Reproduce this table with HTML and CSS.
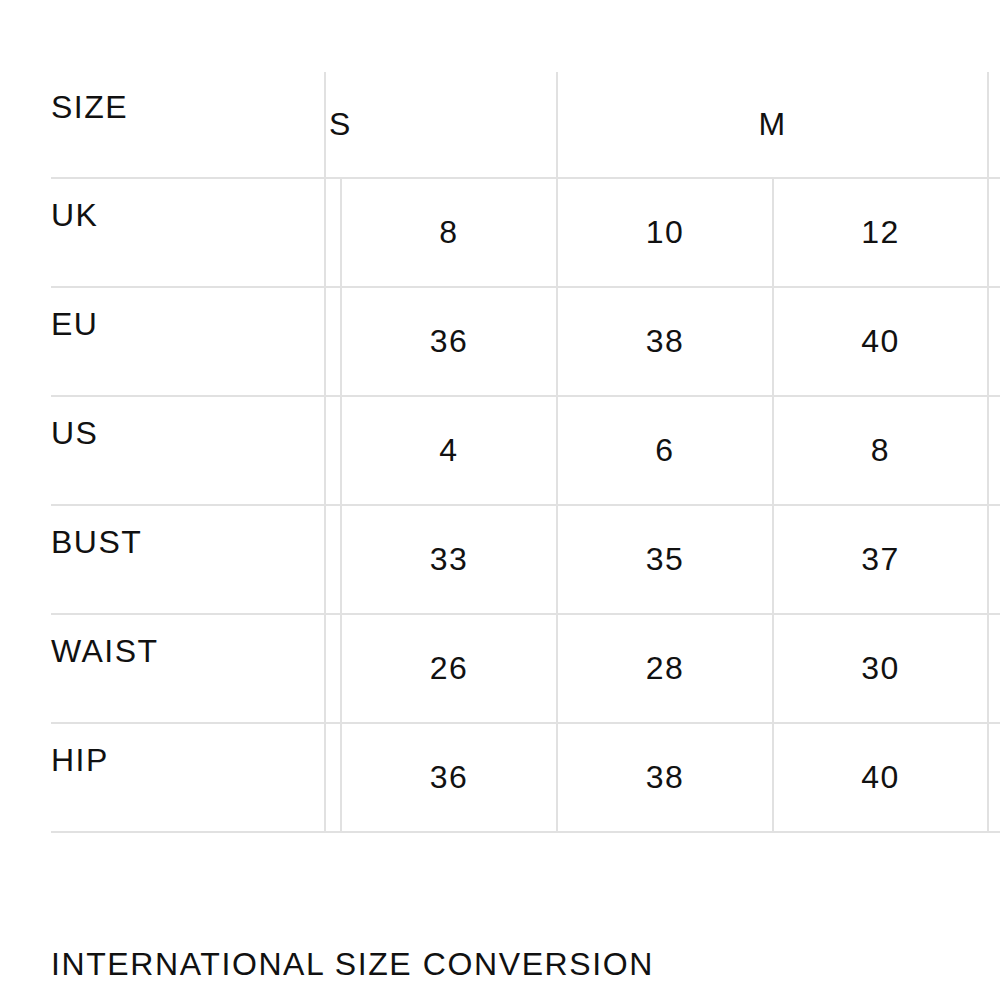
FILE: index.html
```html
<!DOCTYPE html>
<html>
<head>
<meta charset="utf-8">
<link rel="stylesheet" href="styles.css">
</head>
<body>
<div class="page">
  <table class="chart">
    <colgroup>
      <col class="c-label">
      <col class="c-spacer">
      <col class="c-size">
      <col class="c-size">
      <col class="c-size3">
      <col class="c-rest">
    </colgroup>
    <thead>
      <tr class="head">
        <th class="label">SIZE</th>
        <th class="grp grp-s" colspan="2">S</th>
        <th class="grp grp-m" colspan="2">M</th>
        <th class="grp"></th>
      </tr>
    </thead>
    <tbody>
      <tr><th class="label">UK</th><td class="spacer"></td><td>8</td><td>10</td><td>12</td><td></td></tr>
      <tr><th class="label">EU</th><td class="spacer"></td><td>36</td><td>38</td><td>40</td><td></td></tr>
      <tr><th class="label">US</th><td class="spacer"></td><td>4</td><td>6</td><td>8</td><td></td></tr>
      <tr><th class="label">BUST</th><td class="spacer"></td><td>33</td><td>35</td><td>37</td><td></td></tr>
      <tr><th class="label">WAIST</th><td class="spacer"></td><td>26</td><td>28</td><td>30</td><td></td></tr>
      <tr><th class="label">HIP</th><td class="spacer"></td><td>36</td><td>38</td><td>40</td><td></td></tr>
    </tbody>
  </table>
  <h2 class="title">INTERNATIONAL SIZE CONVERSION</h2>
</div>
</body>
</html>
```

FILE: styles.css
```css
* { box-sizing: border-box; }
html, body {
  margin: 0;
  padding: 0;
  background: #fff;
  overflow: hidden;
}
body {
  font-family: "Liberation Sans", Arial, sans-serif;
  color: #111;
}
.page {
  padding: 72px 0 0 51px;
  width: 1000px;
}
.chart {
  border-collapse: separate;
  border-spacing: 0;
  table-layout: fixed;
  width: 949px;
  font-size: 32px;
  letter-spacing: 1.5px;
  line-height: 1.2;
}
.c-label { width: 273px; }
.c-spacer { width: 16px; }
.c-size { width: 216px; }
.c-size3 { width: 215px; }
.c-rest { width: 13px; }

.chart th, .chart td {
  font-weight: normal;
  padding: 0;
  border-bottom: 2px solid #e1e1e1;
  border-left: 2px solid #e1e1e1;
  text-align: center;
  vertical-align: middle;
  height: 109px;
}
.chart .label {
  border-left: none;
  text-align: left;
  vertical-align: top;
  padding-top: 17px;
}
.chart .head th { height: 107px; }
.chart .head .label { padding-top: 16px; }
.chart .grp-s {
  text-align: left;
  padding-left: 3px;
}
.chart .grp-m { text-align: center; }

.title {
  margin: 112px 0 0 0;
  font-weight: normal;
  font-size: 32px;
  line-height: 1.2;
  letter-spacing: 1.6px;
  white-space: nowrap;
}
```
